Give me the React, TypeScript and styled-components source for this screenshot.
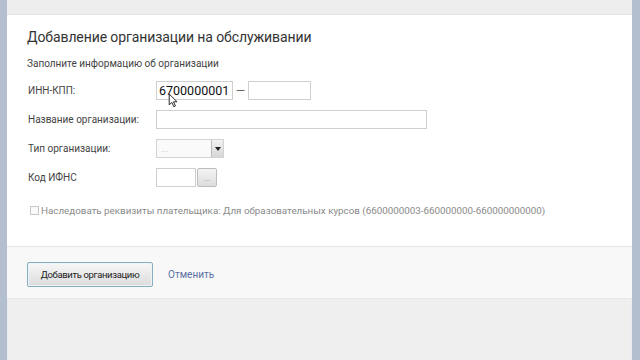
import React from "react";
import styled, { createGlobalStyle } from "styled-components";

const GlobalStyle = createGlobalStyle`
  html, body {
    margin: 0;
    padding: 0;
    background: #efefef;
  }
  body {
    font-family: Roboto, "Open Sans", "DejaVu Sans", sans-serif;
  }
`;

const Window = styled.div`
  position: relative;
  width: 640px;
  height: 360px;
  box-sizing: border-box;
  display: flex;
  flex-direction: column;
  background: #efefef;
  border-left: 7px solid #b3bfcf;
  border-right: 8px solid #b3bfcf;
  box-shadow: inset 1px 0 0 #e8edf3, inset -1px 0 0 #e8edf3;
  overflow: hidden;
`;

const TopBand = styled.div`
  height: 14px;
  background: #eeeeee;
  border-bottom: 1px solid #e2e2e2;
`;

const Card = styled.section`
  background: #ffffff;
  height: 232px;
  box-sizing: border-box;
  padding: 12px 20px 0 20px;
  border-bottom: 1px solid #e6e6e6;
`;

const Title = styled.h1`
  margin: 0;
  font-size: 14px;
  font-weight: 400;
  color: #333;
  line-height: 20px;
  letter-spacing: -0.1px;
`;

const Subtitle = styled.div`
  margin-top: 10px;
  font-size: 10px;
  color: #444;
  line-height: 14px;
`;

const Form = styled.div`
  margin-top: 10px;
  display: flex;
  flex-direction: column;
  gap: 10px;
`;

const Row = styled.div`
  display: flex;
  align-items: center;
  height: 19px;
`;

const Label = styled.div`
  width: 128px;
  padding-left: 1px;
  font-size: 10px;
  color: #444;
`;

const Input = styled.div<{ w: number }>`
  width: ${(p) => p.w}px;
  height: 19px;
  box-sizing: border-box;
  border: 1px solid #cfcfcf;
  background: #fff;
  font-size: 12.5px;
  color: #111;
  line-height: 17px;
  padding-left: 2px;
`;

const Dash = styled.span`
  width: 15px;
  text-align: center;
  color: #666;
  font-size: 12px;
`;

const Select = styled.div`
  width: 68px;
  height: 19px;
  box-sizing: border-box;
  border: 1px solid #d4d4d4;
  display: flex;
  align-items: center;
  background: #fafafa;
`;

const SelectText = styled.span`
  flex: 1;
  font-size: 9px;
  color: #bbb;
  padding-left: 4px;
`;

const SelectArrow = styled.span`
  width: 11px;
  height: 17px;
  border-left: 1px solid #bbb;
  background: linear-gradient(#f2f2f2, #d6d6d6);
  display: flex;
  align-items: center;
  justify-content: center;
  &::after {
    content: "";
    border-left: 3px solid transparent;
    border-right: 3px solid transparent;
    border-top: 4px solid #222;
  }
`;

const SmallButton = styled.div`
  width: 20px;
  height: 19px;
  margin-left: 1px;
  box-sizing: border-box;
  border: 1px solid #bdbdbd;
  border-radius: 2px;
  background: linear-gradient(#f4f4f4, #dcdcdc);
  font-size: 8px;
  color: #999;
  text-align: center;
  line-height: 19px;
`;

const CheckRow = styled.label`
  display: flex;
  align-items: center;
  margin-top: 18px;
  padding-left: 3px;
  font-size: 9.8px;
  color: #8a8a8a;
`;

const Checkbox = styled.span`
  width: 7px;
  height: 7px;
  border: 1px solid #c8c8c8;
  margin-right: 2px;
  background: #fafafa;
`;

const Footer = styled.div`
  height: 52px;
  background: #f8f8f8;
  box-sizing: border-box;
  border-bottom: 1px solid #e8e8e8;
  display: flex;
  align-items: center;
  padding: 3px 20px 0 20px;
  gap: 15px;
`;

const PrimaryButton = styled.button`
  width: 126px;
  height: 25px;
  border: 1px solid #86aec0;
  border-radius: 2px;
  background: linear-gradient(#f7f7f7, #dcdcdc);
  box-shadow: inset 0 0 0 1px #eef5f8;
  font-family: Roboto, Arial, sans-serif;
  font-size: 9.5px;
  color: #222;
  padding: 0;
  letter-spacing: -0.35px;
`;

const CancelLink = styled.a`
  font-size: 10px;
  color: #5a70a4;
  text-decoration: none;
`;

const Cursor = styled.svg`
  position: absolute;
  left: 161px;
  top: 93px;
`;

export default function App() {
  return (
    <>
      <GlobalStyle />
      <Window>
        <TopBand />
        <Card>
          <Title>Добавление организации на обслуживании</Title>
          <Subtitle>Заполните информацию об организации</Subtitle>
          <Form>
            <Row>
              <Label>ИНН-КПП:</Label>
              <Input w={77}>6700000001</Input>
              <Dash>—</Dash>
              <Input w={63} />
            </Row>
            <Row>
              <Label>Название организации:</Label>
              <Input w={271} />
            </Row>
            <Row>
              <Label>Тип организации:</Label>
              <Select>
                <SelectText>...</SelectText>
                <SelectArrow />
              </Select>
            </Row>
            <Row>
              <Label>Код ИФНС</Label>
              <Input w={40} />
              <SmallButton>...</SmallButton>
            </Row>
          </Form>
          <CheckRow>
            <Checkbox />
            Наследовать реквизиты плательщика: Для образовательных курсов
            (6600000003-660000000-660000000000)
          </CheckRow>
        </Card>
        <Footer>
          <PrimaryButton>Добавить организацию</PrimaryButton>
          <CancelLink href="#">Отменить</CancelLink>
        </Footer>
        <Cursor width="11" height="15" viewBox="0 0 10 14">
          <path
            d="M1 1 L1 11 L3.5 8.8 L5.3 12.8 L6.8 12.1 L5 8.2 L8.3 8.2 Z"
            fill="#fff"
            stroke="#222"
            strokeWidth="0.9"
            strokeLinejoin="round"
          />
        </Cursor>
      </Window>
    </>
  );
}
